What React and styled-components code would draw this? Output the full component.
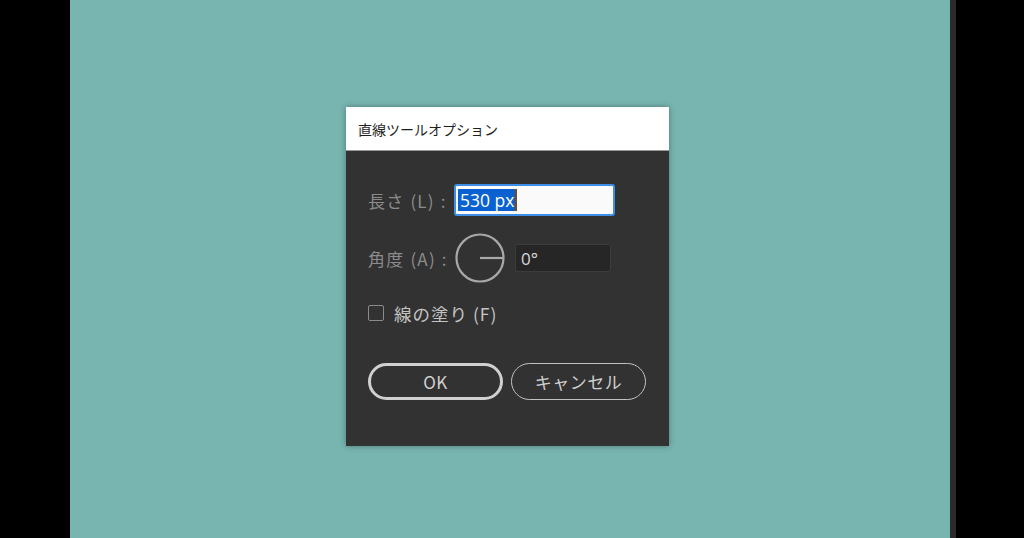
import React from "react";
import styled, { createGlobalStyle } from "styled-components";

const Global = createGlobalStyle`
  html, body { margin: 0; padding: 0; background: #000; }
  body { font-family: "Noto Sans CJK JP", "Noto Sans", sans-serif; }
`;

const Screen = styled.div`
  display: flex;
  width: 1024px;
  height: 538px;
  overflow: hidden;
  background: #000;
`;
const Side = styled.div`
  width: ${p => p.w}px;
  flex: none;
  background: ${p => p.bg};
`;
const Canvas = styled.div`
  width: 880px;
  flex: none;
  background: #78b5b0;
  padding: 107px 0 0 276px;
  box-sizing: border-box;
`;
const Dialog = styled.div`
  width: 323px;
  height: 339px;
  background: #323232;
  box-shadow: 0 0 6px rgba(0, 0, 0, 0.35);
  display: flex;
  flex-direction: column;
`;
const TitleBar = styled.div`
  height: 43px;
  background: #fff;
  border-bottom: 1px solid #9a9a9a;
  display: flex;
  align-items: center;
  padding: 0 12px;
  font-size: 14px;
  color: #1e1e1e;
`;
const Body = styled.div`
  padding: 33px 22px 0 22px;
  display: flex;
  flex-direction: column;
`;
const Row = styled.div`
  display: flex;
  align-items: center;
  height: ${p => p.h}px;
  margin-bottom: ${p => p.mb || 0}px;
`;
const Label = styled.span`
  font-size: 17px;
  letter-spacing: 1.2px;
  word-spacing: 1px;
  color: #8b8b8b;
  width: 86px;
  flex: none;
  white-space: nowrap;
`;
const LenInput = styled.div`
  width: 155px;
  height: 28px;
  background: #fafafa;
  border: 2px solid #3d8ee6;
  border-radius: 3px;
  display: flex;
  align-items: center;
  padding-left: 2px;
`;
const Selected = styled.span`
  background: #0a62d0;
  color: #fff;
  font-family: "Open Sans", "Noto Sans", sans-serif;
  font-size: 17.5px;
  line-height: 22px;
  padding: 0 1px 0 2px;
  border-right: 2px solid #7a4a1a;
`;
const Dial = styled.svg`
  width: 52px;
  height: 52px;
  flex: none;
`;
const AngleInput = styled.div`
  width: 96px;
  height: 28px;
  margin-left: 9px;
  background: #262626;
  border: 1px solid #3c3c3c;
  border-radius: 3px;
  display: flex;
  align-items: center;
  padding-left: 5px;
  box-sizing: border-box;
  font-family: "Open Sans", "Noto Sans", sans-serif;
  font-size: 17px;
  color: #d8d8d8;
`;
const Check = styled.div`
  width: 14px;
  height: 14px;
  border: 1.5px solid #8a8a8a;
  border-radius: 2px;
  margin-right: 10px;
`;
const CheckLabel = styled.span`
  font-size: 17.5px;
  letter-spacing: 1px;
  color: #c4c4c4;
`;
const Buttons = styled.div`
  display: flex;
  gap: 8px;
  margin-top: 40px;
`;
const Button = styled.button`
  width: 135px;
  height: 37px;
  border-radius: 19px;
  background: transparent;
  border: ${p => (p.primary ? "3px solid #d0d0d0" : "1.5px solid #c2c2c2")};
  color: #cfcfcf;
  font-family: "Noto Sans CJK JP", "Noto Sans", sans-serif;
  font-size: 17px;
  letter-spacing: 0.5px;
  box-sizing: border-box;
  padding: 0;
`;

export default function App() {
  return (
    <>
      <Global />
      <Screen>
        <Side w={70} bg="#000" />
        <Canvas>
          <Dialog>
            <TitleBar>直線ツールオプション</TitleBar>
            <Body>
              <Row h={32} mb={16}>
                <Label>長さ (L) :</Label>
                <LenInput>
                  <Selected>530 px</Selected>
                </LenInput>
              </Row>
              <Row h={52} mb={19}>
                <Label>角度 (A) :</Label>
                <Dial viewBox="0 0 52 52">
                  <circle cx="26" cy="26" r="23.5" fill="none" stroke="#a8a8a8" strokeWidth="2.2" />
                  <line x1="26" y1="26" x2="49" y2="26" stroke="#a8a8a8" strokeWidth="2.2" />
                </Dial>
                <AngleInput>0°</AngleInput>
              </Row>
              <Row h={20}>
                <Check />
                <CheckLabel>線の塗り (F)</CheckLabel>
              </Row>
              <Buttons>
                <Button primary>OK</Button>
                <Button>キャンセル</Button>
              </Buttons>
            </Body>
          </Dialog>
        </Canvas>
        <Side w={6} bg="#2b2b2b" />
        <Side w={68} bg="#000" />
      </Screen>
    </>
  );
}
